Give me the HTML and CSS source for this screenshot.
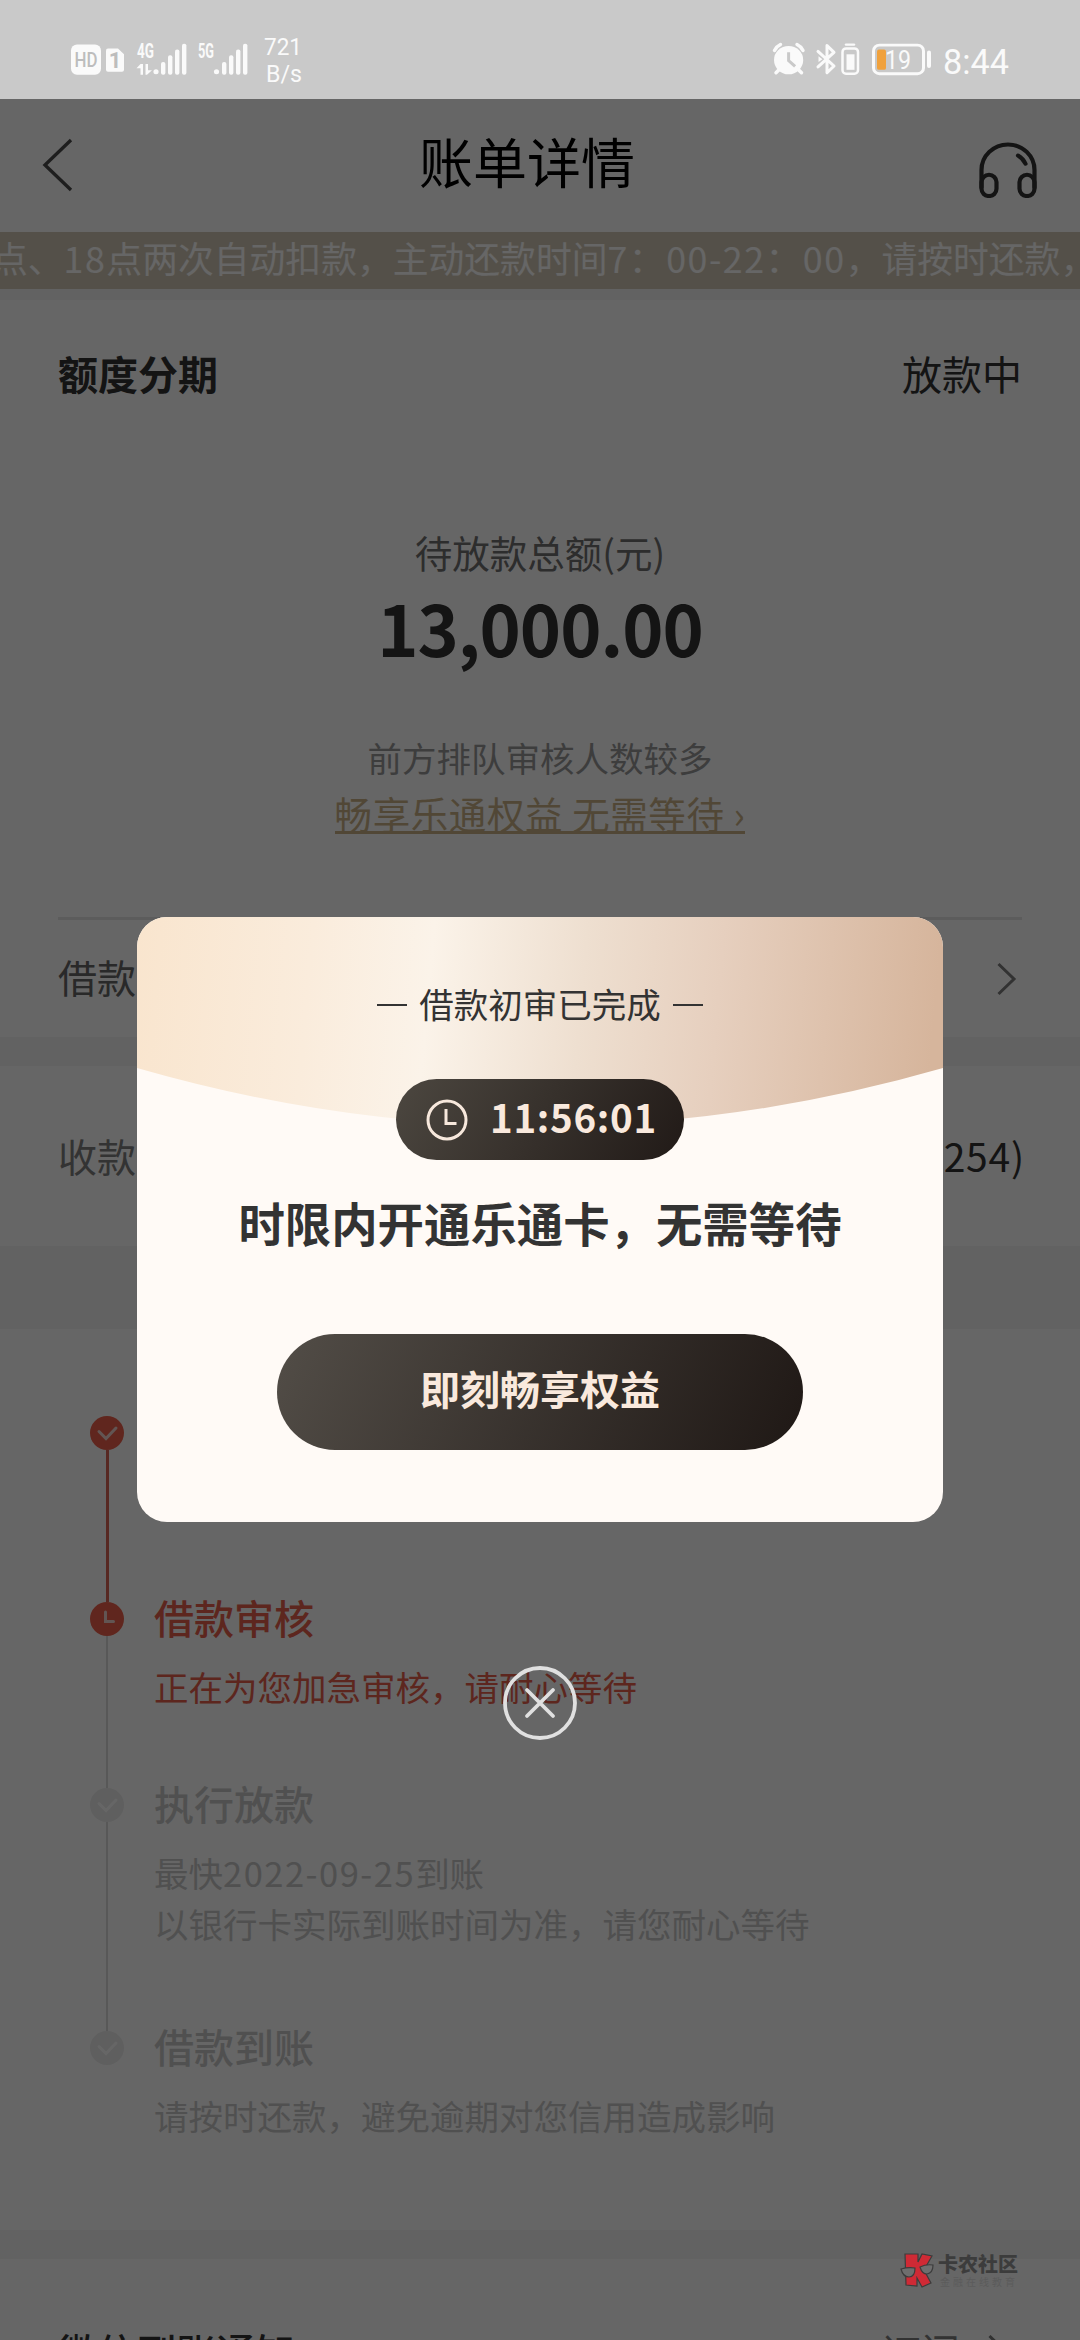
FILE: index.html
```html
<!DOCTYPE html>
<html lang="zh-CN">
<head>
<meta charset="utf-8">
<title>账单详情</title>
<link rel="stylesheet" href="styles.css">
</head>
<body>
<div class="screen">
  <div class="status">
    <svg class="status-icons" viewBox="0 0 320 99" width="320" height="96" preserveAspectRatio="none">
      <g fill="#fafafa">
        <path d="M77 46h18a6 6 0 0 1 6 6v19a6 6 0 0 1-6 6H77a6 6 0 0 1-6-6V52a6 6 0 0 1 6-6z"/>
        <path d="M108 50h10l6 6v16a2 2 0 0 1-2 2h-14a2 2 0 0 1-2-2V52a2 2 0 0 1 2-2z"/>
        <circle cx="156" cy="74" r="2.600"/>
        <rect x="161" y="64" width="4.400" height="13" rx="2"/>
        <rect x="168" y="57" width="4.400" height="20" rx="2"/>
        <rect x="175" y="51" width="4.400" height="26" rx="2"/>
        <rect x="182" y="45" width="4.400" height="32" rx="2"/>
        <circle cx="216.500" cy="74" r="2.600"/>
        <rect x="222" y="64" width="4.400" height="13" rx="2"/>
        <rect x="229" y="57" width="4.400" height="20" rx="2"/>
        <rect x="236" y="51" width="4.400" height="26" rx="2"/>
        <rect x="243" y="45" width="4.400" height="32" rx="2"/>
        <path d="M140.500 66h2.500v11h-2.500v-6.500h-4zM145.500 66h2.500v6.500h4L147 77h-1.500z"/>
      </g>
      <text class="st-hd" x="86" y="69" text-anchor="middle" textLength="23" lengthAdjust="spacingAndGlyphs">HD</text>
      <text class="st-sim" x="115" y="70" text-anchor="middle">1</text>
      <text class="st-net" x="137" y="60" textLength="17" lengthAdjust="spacingAndGlyphs">4G</text>
      <text class="st-net" x="198" y="60" textLength="16" lengthAdjust="spacingAndGlyphs">5G</text>
      <text class="st-rate" x="264" y="57" textLength="38" lengthAdjust="spacingAndGlyphs">721</text>
      <text class="st-rate" x="266" y="85" textLength="36" lengthAdjust="spacingAndGlyphs">B/s</text>
    </svg>
    <svg class="status-icons" viewBox="760 0 320 99" width="320" height="96" preserveAspectRatio="none">
      <circle cx="788.600" cy="62" r="14.600" fill="#fafafa"/>
      <g fill="none" stroke="#fafafa" stroke-width="4" stroke-linecap="round">
        <path d="M774.500 52q2-4 6-6M803 52q-2-4-6-6M779 72l-3 3M798.500 72l3 3" stroke-width="3.500"/>
        <path d="M818 53l16 15-7 7V47l7 7-16 15" stroke-width="3" stroke-linejoin="round"/>
        <rect x="842.500" y="50" width="15.500" height="26" rx="3.500" stroke-width="2.500"/>
        <path d="M846 46h8" stroke-width="2.500"/>
        <rect x="873.500" y="46.500" width="50" height="29.500" rx="6" stroke-width="3"/>
        <path d="M929 54v14" stroke-width="4"/>
      </g>
      <path d="M818.500 58l4 3-4 3z" fill="#fafafa"/>
      <rect x="846.500" y="56" width="8" height="16" fill="#fafafa"/>
      <path d="M788.600 54v8.500l6.500 6" fill="none" stroke="#c9c9c9" stroke-width="3"/>
      <rect x="877" y="51" width="9" height="21" rx="2" fill="#f0a13c"/>
      <text class="st-bat" x="885" y="71.500" textLength="26" lengthAdjust="spacingAndGlyphs">19</text>
      <text class="st-time" x="943" y="76" textLength="66" lengthAdjust="spacingAndGlyphs">8:44</text>
    </svg>
  </div>

  <header class="nav">
    <svg class="back" viewBox="0 0 32 56" width="31" height="54"><path d="M30 2L3 28l27 26" fill="none" stroke="#4d4d4d" stroke-width="3.500"/></svg>
    <h1 class="nav-title">账单详情</h1>
    <svg class="service" viewBox="0 0 58 58" width="58" height="56" preserveAspectRatio="none">
      <g fill="none" stroke="#333" stroke-width="4.200" stroke-linecap="round">
        <path d="M2.500 47V29a26.500 26.500 0 0 1 53 0v18"/>
        <rect x="2.500" y="34" width="15" height="22" rx="7.500"/>
        <rect x="40.500" y="34" width="15" height="22" rx="7.500"/>
        <path d="M39 14q5 3 7.500 8.500"/>
      </g>
    </svg>
  </header>

  <div class="notice"><span class="notice-text">点、<span class="num">18</span>点两次自动扣款，主动还款时间<span class="num">7：00-22：00</span>，请按时还款，</span></div>

  <section class="summary">
    <div class="summary-head"><strong>额度分期</strong><span>放款中</span></div>
    <p class="sum-label">待放款总额(元)</p>
    <p class="sum-amount">13,000.00</p>
    <p class="sum-queue">前方排队审核人数较多</p>
    <p class="sum-link"><span>畅享乐通权益 无需等待 ›</span></p>
  </section>
  <div class="row row-contract">
    <span>借款合同</span>
    <svg viewBox="0 0 20 34" width="20" height="34"><path d="M1.500 2L17 17 1.500 32" fill="none" stroke="#7d7d7d" stroke-width="3"/></svg>
  </div>
  <div class="band band-thin"></div>
  <div class="row row-bank"><span class="muted">收款银行</span><span class="account">(2254)</span></div>
  <div class="band band-wide"></div>

  <section class="timeline">
    <div class="step step-1 done">
      <div class="rail"><svg viewBox="0 0 34 34" width="34" height="34"><circle cx="17" cy="17" r="17"/><path d="M9 15.500l7 7 10-10.500"/></svg></div>
    </div>
    <div class="step step-2 now">
      <div class="rail"><svg viewBox="0 0 34 34" width="34" height="34"><circle cx="17" cy="17" r="17"/><path d="M15.500 10v9.500h8"/></svg></div>
      <div class="step-body"><h2>借款审核</h2><p>正在为您加急审核，请耐心等待</p></div>
    </div>
    <div class="step step-3">
      <div class="rail"><svg viewBox="0 0 34 34" width="34" height="34"><circle cx="17" cy="17" r="17"/><path d="M9 15.500l7 7 10-10.500"/></svg></div>
      <div class="step-body"><h2>执行放款</h2><p>最快<span class="num">2022-09-25</span>到账<br>以银行卡实际到账时间为准，请您耐心等待</p></div>
    </div>
    <div class="step step-4">
      <div class="rail"><svg viewBox="0 0 34 34" width="34" height="34"><circle cx="17" cy="17" r="17"/><path d="M9 15.500l7 7 10-10.500"/></svg></div>
      <div class="step-body"><h2>借款到账</h2><p>请按时还款，避免逾期对您信用造成影响</p></div>
    </div>
  </section>
  <div class="band band-thin"></div>
  <div class="row row-wechat">
    <strong>微信到账通知</strong>
    <span class="subscribe">订阅<svg viewBox="0 0 20 34" width="20" height="34"><path d="M1.500 2L17 17 1.500 32" fill="none" stroke="#7d7d7d" stroke-width="3"/></svg></span>
  </div>

  <div class="scrim">
    <div class="dialog">
      <svg class="dialog-arc" viewBox="0 0 806 212" width="806" height="212">
        <defs><linearGradient id="arc" gradientUnits="userSpaceOnUse" x1="0" y1="0" x2="800" y2="70">
          <stop offset="0" stop-color="#f9e5ce"/><stop offset=".22" stop-color="#faecdc"/><stop offset=".37" stop-color="#fbf3e9"/>
          <stop offset=".56" stop-color="#eedfd0"/><stop offset=".73" stop-color="#e6cfbe"/><stop offset="1" stop-color="#d6b59c"/>
        </linearGradient></defs>
        <path d="M0 0h806v151Q403 267 0 151z" fill="url(#arc)"/>
      </svg>
      <div class="dialog-body">
        <p class="dialog-sub"><i></i>借款初审已完成<i></i></p>
        <div class="countdown">
          <svg viewBox="0 0 42 42" width="42" height="42"><g fill="none" stroke="#f7e8dc" stroke-width="3"><circle cx="21" cy="21" r="19"/><path d="M20 10v14.500h10.500"/></g></svg>
          <span>11:56:01</span>
        </div>
        <p class="dialog-title">时限内开通乐通卡，无需等待</p>
        <div class="cta">即刻畅享权益</div>
      </div>
    </div>
    <svg class="close" viewBox="0 0 76 76" width="76" height="76"><g fill="none" stroke="#e0e0e0" stroke-width="3.800" stroke-linecap="round"><circle cx="38" cy="38" r="35"/><path d="M25 25l26 26M51 25L25 51"/></g></svg>
  </div>

  <div class="mark">
    <svg viewBox="0 0 34 36" width="34" height="36">
      <g fill="#cf2a35" stroke="#3c3c3c" stroke-width="1.200"><path d="M5 2h13v8l4-8 10 2-8 14 7 13-9 4-5-9v8L6 33z"/></g>
      <g fill="#6e6e6e" stroke="#3c3c3c" stroke-width="1.200"><path d="M1 17q7-2 14-1 0 9-6 9-6 0-8-8zM20 15q6-3 13-2 0 8-6 9-5 0-7-7z"/></g>
    </svg>
    <div class="mark-text"><b>卡农社区</b><small>金融在线教育</small></div>
  </div>
</div>
</body>
</html>
```
FILE: styles.css
```css
* { box-sizing: border-box; margin: 0; padding: 0; }
body { width: 1080px; height: 2340px; overflow: hidden; font-family: "Noto Sans CJK SC", sans-serif; }
.screen { position: relative; width: 1080px; height: 2340px; overflow: hidden; background: #fff; color: #333; display: flex; flex-direction: column; }
.screen > * { flex-shrink: 0; }

.status { height: 99px; background: #c9c9c9; display: flex; justify-content: space-between; align-items: flex-start; position: relative; z-index: 3; }
.status-icons { display: block; }
.status text { font-family: "Roboto", sans-serif; fill: #fafafa; }
.status .st-hd { font-size: 20px; font-weight: 500; fill: #bdbdbd; }
.status .st-sim { font-size: 22px; font-weight: 700; fill: #bdbdbd; }
.status .st-net { font-size: 20px; font-weight: 700; }
.status .st-rate { font-size: 25px; }
.status .st-bat { font-size: 27px; }
.status .st-time { font-size: 37px; }

.nav { height: 133px; display: flex; justify-content: space-between; align-items: flex-start; padding: 0 43px 0 42px; }
.back { margin-top: 39px; }
.nav-title { font-size: 54px; line-height: 80px; font-weight: 400; color: #000; margin: 22px 0 0 2px; }
.service { margin-top: 43px; }

.notice { height: 68px; background: #f3f3f3; border-bottom: 11px solid #f5f5f5; white-space: nowrap; overflow: hidden; }
.notice-text { display: block; height: 57px; background: #d3c9b7; color: #fff; font-size: 35.800px; line-height: 51px; text-indent: -8px; }
.num { letter-spacing: 1.500px; }

.summary { height: 617px; padding: 0 58px; text-align: center; }
.summary-head { display: flex; justify-content: space-between; font-size: 40px; line-height: 60px; margin-top: 43px; }
.sum-label { font-size: 37.500px; line-height: 56px; color: #707070; margin-top: 121px; }
.sum-amount { font-size: 70px; line-height: 90px; font-weight: 700; letter-spacing: -1px; margin-top: 2px; }
.sum-queue { font-size: 34.500px; line-height: 50px; color: #999; margin-top: 60px; }
.sum-link { font-size: 37.500px; line-height: 56px; letter-spacing: .600px; color: #cbb287; margin-top: 3px; }
.sum-link span { border-bottom: 3px solid #cbb287; display: inline-block; height: 43px; line-height: 43px; }

.row { display: flex; justify-content: space-between; align-items: center; margin: 0 58px; font-size: 39px; }
.row span { margin-top: -3px; }
.row-contract { height: 120px; border-top: 3px solid #e6e6e6; padding-right: 5px; }
.row-contract span { color: #666; margin-top: -6px; }
.row-bank { height: 180px; }
.account { letter-spacing: .800px; margin-right: -3px; }
.muted { color: #808080; }
.band { background: #f5f5f5; }
.band-thin { height: 29px; }
.band-wide { height: 83px; }

.timeline { height: 901px; padding: 87px 58px 0 90px; }
.step { display: flex; gap: 30px; }
.step-1, .step-2 { height: 186px; }
.step-3 { height: 243px; }
.rail { width: 34px; display: flex; flex-direction: column; align-items: center; }
.rail svg { display: block; flex-shrink: 0; }
.rail::after { content: ""; width: 2px; flex: 1; background: #dcdcdc; }
.step-4 .rail::after { content: none; }
.rail circle { fill: #ededed; }
.rail path { fill: none; stroke: #fff; stroke-width: 3; stroke-linecap: round; }
.done .rail::after { width: 3px; background: #d96555; }
.done circle, .now circle { fill: #ef604b; }
.done path, .now path { stroke: #f5d5d0; }
.step-body { color: #c8c8c8; }
.step-body h2 { font-size: 40px; line-height: 60px; font-weight: 500; margin-top: -15px; }
.step-body p { font-size: 34.500px; line-height: 51px; margin-top: 14px; white-space: nowrap; }
.now .step-body { color: #e8604d; }

.row-wechat { padding-top: 62px; line-height: 60px; font-size: 39.500px; }
.row-wechat strong { font-weight: 500; }
.row-wechat .subscribe { display: flex; align-items: center; gap: 28px; color: #808080; margin: 0 14px 0 0; }

/* modal layer */
.scrim { position: absolute; inset: 0; background: rgba(0, 0, 0, .6); display: flex; flex-direction: column; align-items: center; padding-top: 917px; }
.dialog { position: relative; width: 806px; height: 605px; border-radius: 30px; overflow: hidden; background: #fffaf6; }
.dialog-arc { position: absolute; left: 0; top: 0; }
.dialog-body { position: relative; display: flex; flex-direction: column; align-items: center; padding-top: 61px; }
.dialog-sub { display: flex; align-items: center; gap: 12px; font-size: 34.500px; line-height: 50px; color: #333; }
.dialog-sub i { width: 30px; height: 2px; background: #333; margin-top: 3px; }
.countdown { width: 288px; height: 81px; margin-top: 51px; border-radius: 41px; background: linear-gradient(120deg, #4c4740, #211a17); display: flex; align-items: center; gap: 22px; padding-left: 30px; color: #f9e9dd; font-size: 38.500px; font-weight: 700; letter-spacing: .700px; }
.countdown span { margin-top: -7px; }
.dialog-title { font-size: 46.400px; line-height: 68px; font-weight: 700; color: #333; margin-top: 28px; white-space: nowrap; }
.cta { width: 526px; height: 116px; margin-top: 78px; border-radius: 58px; background: linear-gradient(115deg, #524d47, #1f1815); color: #f9e9dd; font-size: 40px; font-weight: 700; line-height: 108px; text-align: center; }
.close { margin-top: 143px; }

.mark { position: absolute; left: 900px; top: 2252px; display: flex; gap: 4px; }
.mark-text { display: flex; flex-direction: column; color: #3c3c3c; }
.mark-text b { font-size: 20px; line-height: 24px; font-weight: 900; }
.mark-text small { font-size: 10px; line-height: 12px; letter-spacing: 3px; color: #5b5b5b; padding-left: 2px; }
```
